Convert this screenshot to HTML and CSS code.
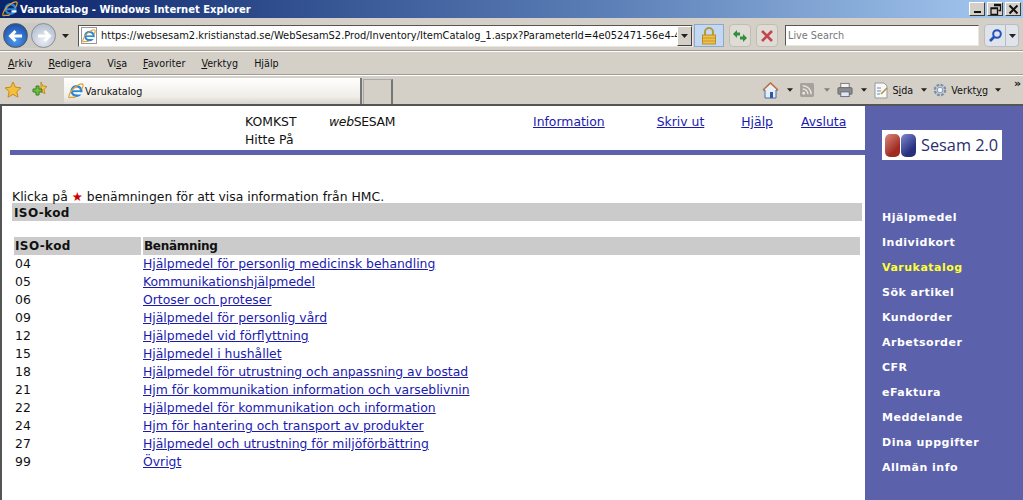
FILE: index.html
```html
<!DOCTYPE html>
<html lang="sv">
<head>
<meta charset="utf-8">
<title>Varukatalog</title>
<link rel="stylesheet" href="styles.css">
</head>
<body>
<svg class="defs" width="0" height="0" aria-hidden="true">
  <defs>
    <symbol id="ie" viewBox="0 0 16 16">
      <circle cx="8.500" cy="8" r="4.800" fill="none" stroke="#2a86d6" stroke-width="2.500"/>
      <rect x="4" y="7.300" width="9.500" height="1.800" fill="#2a86d6"/>
      <rect x="10" y="9.100" width="5" height="2.200" fill="#fff" fill-opacity="0"/>
      <path d="M9.500 9.300h5v2.200h-5z" fill="#fff"/>
      <path d="M3 14C-1 17 1 10 5 6S15-1 15 2c.5 1.500-1 3.500-1.500 4.500M3 14c1.500.8 3.500.4 5-.3" fill="none" stroke="#e5a02c" stroke-width="1.200"/>
    </symbol>
    <symbol id="caret" viewBox="0 0 7 4"><path d="M0 0h7L3.500 4z" fill="#222"/></symbol>
  </defs>
</svg>

<header class="titlebar">
  <svg class="title-ie"><use href="#ie"/></svg>
  <span class="title-text">Varukatalog - Windows Internet Explorer</span>
  <span class="winbtns">
    <span class="winbtn"><i class="g-min"></i></span>
    <span class="winbtn"><svg width="13" height="13" viewBox="0 0 13 13"><path d="M5 1.500h6.500v6H9.500M2 5h6.500v6.500H2zM2 5.500h6.500M5 2.500h6.500" fill="none" stroke="#111" stroke-width="1.300"/></svg></span>
    <span class="winbtn"><svg width="13" height="13" viewBox="0 0 13 13"><path d="M2.500 2.500l8 8M10.500 2.500l-8 8" stroke="#111" stroke-width="2"/></svg></span>
  </span>
</header>

<div class="addressbar">
  <div class="navgroup">
    <span class="navbtn back"><svg width="20" height="20" viewBox="0 0 20 20"><path d="M16 10H5M9.500 5L4.500 10l5 5" fill="none" stroke="#fff" stroke-width="3"/></svg></span>
    <span class="navbtn fwd"><svg width="20" height="20" viewBox="0 0 20 20"><path d="M4 10h11M10.500 5l5 5-5 5" fill="none" stroke="#fff" stroke-width="3"/></svg></span>
  </div>
  <svg class="caret nav-caret"><use href="#caret"/></svg>
  <div class="urlbox">
    <span class="pageicon"><svg width="14" height="14"><use href="#ie"/></svg></span>
    <span class="urltext">https://websesam2.kristianstad.se/WebSesamS2.Prod/Inventory/ItemCatalog_1.aspx?ParameterId=4e052471-56e4-4</span>
    <span class="urldrop"><svg class="caret"><use href="#caret"/></svg></span>
  </div>
  <span class="lockbtn"><svg width="16" height="18" viewBox="0 0 16 18"><path d="M4 8V5a4 4 0 0 1 8 0v3" fill="none" stroke="#b39a3c" stroke-width="2"/><rect x="1.500" y="8" width="13" height="9" fill="#eec24a" stroke="#b98e22"/><path d="M2 11h12M2 14h12" stroke="#c9962a"/></svg></span>
  <span class="toolbtn"><svg width="18" height="16" viewBox="0 0 18 16"><path d="M2 6l4-4v2.500h3v3H6V10zM16 10l-4 4v-2.500H9v-3h3V6z" fill="#2f8f3a"/></svg></span>
  <span class="toolbtn"><svg width="14" height="14" viewBox="0 0 14 14"><path d="M2 2l10 10M12 2L2 12" stroke="#c4454f" stroke-width="2.600"/></svg></span>
  <div class="searchbox">Live Search</div>
  <div class="searchbtns">
    <span class="sbtn"><svg width="15" height="15" viewBox="0 0 15 15"><circle cx="9" cy="6" r="3.800" fill="none" stroke="#2450c0" stroke-width="2"/><path d="M6 9l-4 4" stroke="#2450c0" stroke-width="2.600"/></svg></span>
    <span class="sdrop"><svg class="caret"><use href="#caret"/></svg></span>
  </div>
</div>

<nav class="menubar">
  <span><u>A</u>rkiv</span>
  <span><u>R</u>edigera</span>
  <span>Vi<u>s</u>a</span>
  <span><u>F</u>avoriter</span>
  <span><u>V</u>erktyg</span>
  <span>H<u>j</u>älp</span>
</nav>

<div class="tabbar">
  <svg class="fav" width="18" height="18" viewBox="0 0 18 18"><path d="M9 1l2.400 5.200 5.600.6-4.200 3.800 1.200 5.600L9 13.400 4 16.200l1.200-5.600L1 6.800l5.600-.6z" fill="#f4bf3c" stroke="#c98a1e"/></svg>
  <svg class="fav add" width="18" height="18" viewBox="0 0 18 18"><path d="M10 1l1.800 4 4.200.5-3 2.900.9 4.300L10 10.600z" fill="#f4c94a" stroke="#c98a1e"/><path d="M5 5h3v3h3v3H8v3H5v-3H2V8h3z" fill="#6fbf3f" stroke="#3a7d22"/></svg>
  <div class="tab">
    <svg class="tab-ie"><use href="#ie"/></svg>
    <span>Varukatalog</span>
  </div>
  <div class="newtab"></div>
  <div class="cmds">
    <svg width="17" height="17" viewBox="0 0 17 17"><path d="M8.500 1L1 8h2v8h11V8h2z" fill="#e8eef6" stroke="#4a6a9a"/><path d="M1 8l7.500-7L16 8" fill="none" stroke="#c0703a" stroke-width="1.500"/><rect x="8" y="10" width="3" height="6" fill="#2a5aa8"/></svg>
    <svg class="caret"><use href="#caret"/></svg>
    <svg class="gap-a" width="14" height="14" viewBox="0 0 15 15"><rect width="15" height="15" rx="1.500" fill="#a5a39b"/><circle cx="4" cy="11" r="1.500" fill="#e8e6df"/><path d="M3 6.500a5.500 5.500 0 0 1 5.500 5.500M3 3a9 9 0 0 1 9 9" fill="none" stroke="#e8e6df" stroke-width="1.500"/></svg>
    <svg class="caret dim wide"><use href="#caret"/></svg>
    <svg class="gap-a" width="16" height="16" viewBox="0 0 17 16"><rect x="4" y="1" width="9" height="5" fill="#f4f4f4" stroke="#777"/><rect x="1" y="5.500" width="15" height="7" rx="1" fill="#8c8c88" stroke="#666"/><rect x="4" y="10" width="9" height="5" fill="#dfe7f0" stroke="#668"/></svg>
    <svg class="caret"><use href="#caret"/></svg>
    <svg class="gap-a" width="15" height="17" viewBox="0 0 15 17"><path d="M1 1h9l3 3v12H1z" fill="#f8f8f4" stroke="#999"/><path d="M3 6h4M3 9h4M3 12h3" stroke="#6a8ac0"/><path d="M7 12l6-6" stroke="#b08a3a" stroke-width="1.500"/></svg>
    <span class="cmdtext">S<u>i</u>da</span>
    <svg class="caret"><use href="#caret"/></svg>
    <svg class="gap-b" width="16" height="16" viewBox="0 0 17 17"><circle cx="8.500" cy="8.500" r="5.500" fill="#cdd6e0" stroke="#7e8fa3" stroke-width="2.500" stroke-dasharray="3 1.300"/><circle cx="8.500" cy="8.500" r="3" fill="#eef3f8" stroke="#7e8fa3"/></svg>
    <span class="cmdtext">Verkt<u>y</u>g</span>
    <svg class="caret tight"><use href="#caret"/></svg>
    <span class="more">»</span>
  </div>
</div>

<div class="page">
  <main class="main">
    <div class="tophead">
      <div class="identity">
        <div class="id-row"><span class="id-name">KOMKST</span><span class="id-app"><em>web</em>SESAM</span></div>
        <div>Hitte På</div>
      </div>
      <nav class="toplinks">
        <a href="#" class="l-info">Information</a>
        <a href="#" class="l-print">Skriv ut</a>
        <a href="#" class="l-help">Hjälp</a>
        <a href="#" class="l-exit">Avsluta</a>
      </nav>
    </div>
    <div class="rule"></div>
    <p class="hint">Klicka på <span class="star">★</span> benämningen för att visa information från HMC.</p>
    <div class="section-head">ISO-kod</div>
    <table class="iso">
      <thead><tr><th class="th-code">ISO-kod</th><th class="th-name">Benämning</th></tr></thead>
      <tbody>
        <tr><td>04</td><td><a href="#">Hjälpmedel för personlig medicinsk behandling</a></td></tr>
        <tr><td>05</td><td><a href="#">Kommunikationshjälpmedel</a></td></tr>
        <tr><td>06</td><td><a href="#">Ortoser och proteser</a></td></tr>
        <tr><td>09</td><td><a href="#">Hjälpmedel för personlig vård</a></td></tr>
        <tr><td>12</td><td><a href="#">Hjälpmedel vid förflyttning</a></td></tr>
        <tr><td>15</td><td><a href="#">Hjälpmedel i hushållet</a></td></tr>
        <tr><td>18</td><td><a href="#">Hjälpmedel för utrustning och anpassning av bostad</a></td></tr>
        <tr><td>21</td><td><a href="#">Hjm för kommunikation information och varseblivnin</a></td></tr>
        <tr><td>22</td><td><a href="#">Hjälpmedel för kommunikation och information</a></td></tr>
        <tr><td>24</td><td><a href="#">Hjm för hantering och transport av produkter</a></td></tr>
        <tr><td>27</td><td><a href="#">Hjälpmedel och utrustning för miljöförbättring</a></td></tr>
        <tr><td>99</td><td><a href="#">Övrigt</a></td></tr>
      </tbody>
    </table>
  </main>
  <aside class="side">
    <div class="logo">
      <span class="logo-l"></span><span class="logo-r"></span>
      <span class="logo-t">Sesam 2.0</span>
    </div>
    <nav class="sidenav">
      <a href="#">Hjälpmedel</a>
      <a href="#">Individkort</a>
      <a href="#" class="active">Varukatalog</a>
      <a href="#">Sök artikel</a>
      <a href="#">Kundorder</a>
      <a href="#">Arbetsorder</a>
      <a href="#">CFR</a>
      <a href="#">eFaktura</a>
      <a href="#">Meddelande</a>
      <a href="#">Dina uppgifter</a>
      <a href="#">Allmän info</a>
    </nav>
  </aside>
</div>
</body>
</html>
```

FILE: styles.css
```css
* { box-sizing: border-box; }
html, body { margin: 0; height: 500px; overflow: hidden; }
body {
  width: 1023px;
  display: flex;
  flex-direction: column;
  background: #d4d0c8;
  font-family: "DejaVu Sans", Verdana, sans-serif;
  font-size: 12.4px;
  color: #111;
}
.defs { position: absolute; }
svg { display: block; flex: none; }
.caret { width: 7px; height: 4px; }
.caret.dim { opacity: .45; }

.titlebar {
  height: 18px;
  display: flex;
  align-items: center;
  background: linear-gradient(90deg, #0a246a 0%, #5d80b8 60%, #a6caf0 100%);
  color: #fff;
  padding-left: 2px;
}
.title-ie { width: 16px; height: 16px; }
.title-text { margin-left: 2px; font: bold 10px "DejaVu Sans", sans-serif; white-space: nowrap; }
.winbtns { margin-left: auto; display: flex; gap: 2px; padding-right: 2px; }
.winbtn {
  width: 16px; height: 14px;
  background: #d4d0c8;
  border: 1px solid; border-color: #fff #404040 #404040 #fff;
  display: flex; align-items: center; justify-content: center;
}
.g-min { display: block; width: 7px; height: 2px; background: #111; margin-top: 6px; }

.addressbar {
  height: 34px;
  display: flex;
  align-items: center;
  background: #d4d0c8;
  border-bottom: 1px solid #fff;
  box-shadow: inset 0 -1px 0 #a09c94;
  padding: 4px 3px 2px 3px;
}
.navgroup {
  display: flex; gap: 3px;
  background: #ccc9c2;
  border-radius: 14px;
}
.navbtn {
  width: 25px; height: 25px; border-radius: 50%;
  display: flex; align-items: center; justify-content: center;
  border: 1px solid #555;
}
.back { background: radial-gradient(circle at 50% 70%, #4e9af0, #123f9c); }
.fwd { background: radial-gradient(circle at 50% 70%, #e8edf5, #a8b3c4); border-color: #8a8f98; }
.nav-caret { margin: 0 9px 0 6px; }
.urlbox {
  width: 615px; height: 22px;
  display: flex; align-items: center;
  background: #fff;
  border: 1px solid; border-color: #555 #e8e6df #e8e6df #555;
  overflow: hidden;
}
.pageicon {
  width: 16px; height: 17px; margin: 0 4px 0 2px;
  background: #fff; border: 1px solid #999;
  display: flex; align-items: center; justify-content: center;
}
.urltext { flex: 1; min-width: 0; white-space: nowrap; font-size: 9.9px; }
.urldrop {
  width: 15px; height: 20px;
  background: #d4d0c8;
  border: 1px solid; border-color: #fff #404040 #404040 #fff;
  display: flex; align-items: center; justify-content: center;
}
.lockbtn {
  width: 30px; height: 23px; margin-left: 1px;
  background: #c3d9f3; border: 1px solid #8fa9c9;
  display: flex; align-items: center; justify-content: center;
}
.toolbtn {
  width: 22px; height: 23px; margin-left: 5px;
  background: #dedcd5; border: 1px solid #c0bdb5; border-radius: 4px;
  display: flex; align-items: center; justify-content: center;
}
.searchbox {
  width: 194px; height: 21px; margin-left: 7px;
  background: #fff; color: #777;
  border: 1px solid; border-color: #555 #e8e6df #e8e6df #555;
  padding-left: 2px;
  font-size: 9.7px; line-height: 19px;
}
.searchbtns { display: flex; margin-left: 5px; }
.sbtn, .sdrop {
  height: 23px; background: #dfe3ea; border: 1px solid #b8bcc4;
  display: flex; align-items: center; justify-content: center;
}
.sbtn { width: 22px; border-radius: 4px 0 0 4px; }
.sdrop { width: 13px; border-radius: 0 4px 4px 0; border-left: 0; }

.menubar {
  height: 23px;
  display: flex;
  align-items: center;
  background: #d4d0c8;
  border-bottom: 1px solid #a09c94;
  font-size: 9.6px;
  padding: 1px 0 0 8px;
  gap: 16px;
}

.tabbar {
  height: 31px;
  display: flex;
  align-items: flex-end;
  background: #d4d0c8;
  border-bottom: 2px solid #555;
  border-top: 1px solid #fff;
  position: relative;
}
.fav { align-self: center; margin-left: 4px; }
.fav.add { margin-left: 9px; }
.tab {
  width: 298px; height: 26px; margin-left: 15px;
  display: flex; align-items: center;
  background: linear-gradient(#fff, #f0eee8 70%, #d8d5cd);
  border-right: 2px solid #777;
  font-size: 9.6px;
  padding-left: 4px;
}
.tab-ie { width: 16px; height: 16px; margin-right: 1px; }
.newtab {
  width: 30px; height: 25px;
  background: #d4d0c8;
  border: 1px solid #aaa; border-bottom: 0; border-right: 2px solid #777;
  margin-left: 1px;
}
.cmds {
  margin-left: auto;
  align-self: center;
  display: flex; align-items: center;
  font-size: 9.6px;
  padding-right: 22px;
  position: relative;
}
.cmds .caret { width: 6px; margin-left: 8px; }
.cmds .caret.wide { margin-left: 10px; }
.cmds .caret.tight { margin-left: 7px; }
.cmds .gap-a { margin-left: 7px; }
.cmds .gap-b { margin-left: 5px; }
.cmdtext { margin-left: 3px; }
.more { position: absolute; right: 2px; top: -5px; font-weight: bold; font-size: 11px; }

.page {
  flex: 1;
  min-height: 0;
  display: flex;
  background: #fff;
  border-left: 2px solid #555;
}
.main { width: 863px; }
.side { width: 158px; background: #5b61ab; }

.tophead {
  display: flex;
  height: 44px;
  padding: 7px 0 0 243px;
  line-height: 18px;
}
.identity { width: 150px; flex: none; }
.id-row { display: flex; }
.id-name { width: 84px; flex: none; }
.id-app { letter-spacing: -.3px; white-space: nowrap; }
.toplinks { display: flex; margin-left: 138px; }
.toplinks a { color: #1a1ab0; display: block; }
.l-print { margin-left: 52px; }
.l-help { margin-left: 37px; }
.l-exit { margin-left: 28px; }
.rule { height: 5px; margin-left: 8px; background: #5b61ab; }

.hint { margin: 35px 0 0 10px; height: 13px; line-height: 14px; white-space: nowrap; }
.star { color: #cc0000; }

.section-head {
  margin: 0 3px 0 10px;
  height: 18px;
  padding-left: 2px;
  background: #cbcbcb;
  font-weight: bold;
  font-size: 12px;
  letter-spacing: .4px;
  line-height: 20px;
}
.iso {
  margin: 16px 0 0 12px;
  width: 846px;
  border-collapse: collapse;
  table-layout: fixed;
}
.iso th {
  background: #cbcbcb;
  text-align: left;
  height: 18px;
  padding: 0 1px;
  line-height: 18px;
  font-size: 12px;
  border-right: 2px solid #fff;
}
.iso .th-code { width: 128px; letter-spacing: .4px; }
.iso .th-name { border-right: 0; letter-spacing: -.3px; }
.iso td { height: 18px; padding: 0 1px; line-height: 18px; white-space: nowrap; }
.iso a { color: #1a1ab0; }

.logo {
  margin: 24px 0 0 17px;
  width: 120px; height: 30px;
  background: #fff;
  display: flex; align-items: center;
  padding-left: 3px;
}
.logo-l, .logo-r { width: 15px; height: 23px; border-radius: 5px; }
.logo-l { background: linear-gradient(135deg, #d98a80, #a02a22 70%); }
.logo-r { margin-left: 1px; background: linear-gradient(135deg, #7e8ad0, #28307e 70%); }
.logo-t {
  margin-left: 5px;
  font: 16.3px "Open Sans", sans-serif;
  color: #2a2f6e;
  white-space: nowrap;
}
.sidenav { margin-top: 45px; display: flex; flex-direction: column; padding-left: 17px; }
.sidenav a {
  height: 25px; line-height: 25px;
  color: #fff; font-weight: bold; font-size: 11px;
  letter-spacing: .5px;
  text-decoration: none;
  white-space: nowrap;
}
.sidenav a.active { color: #ffff33; }
```
